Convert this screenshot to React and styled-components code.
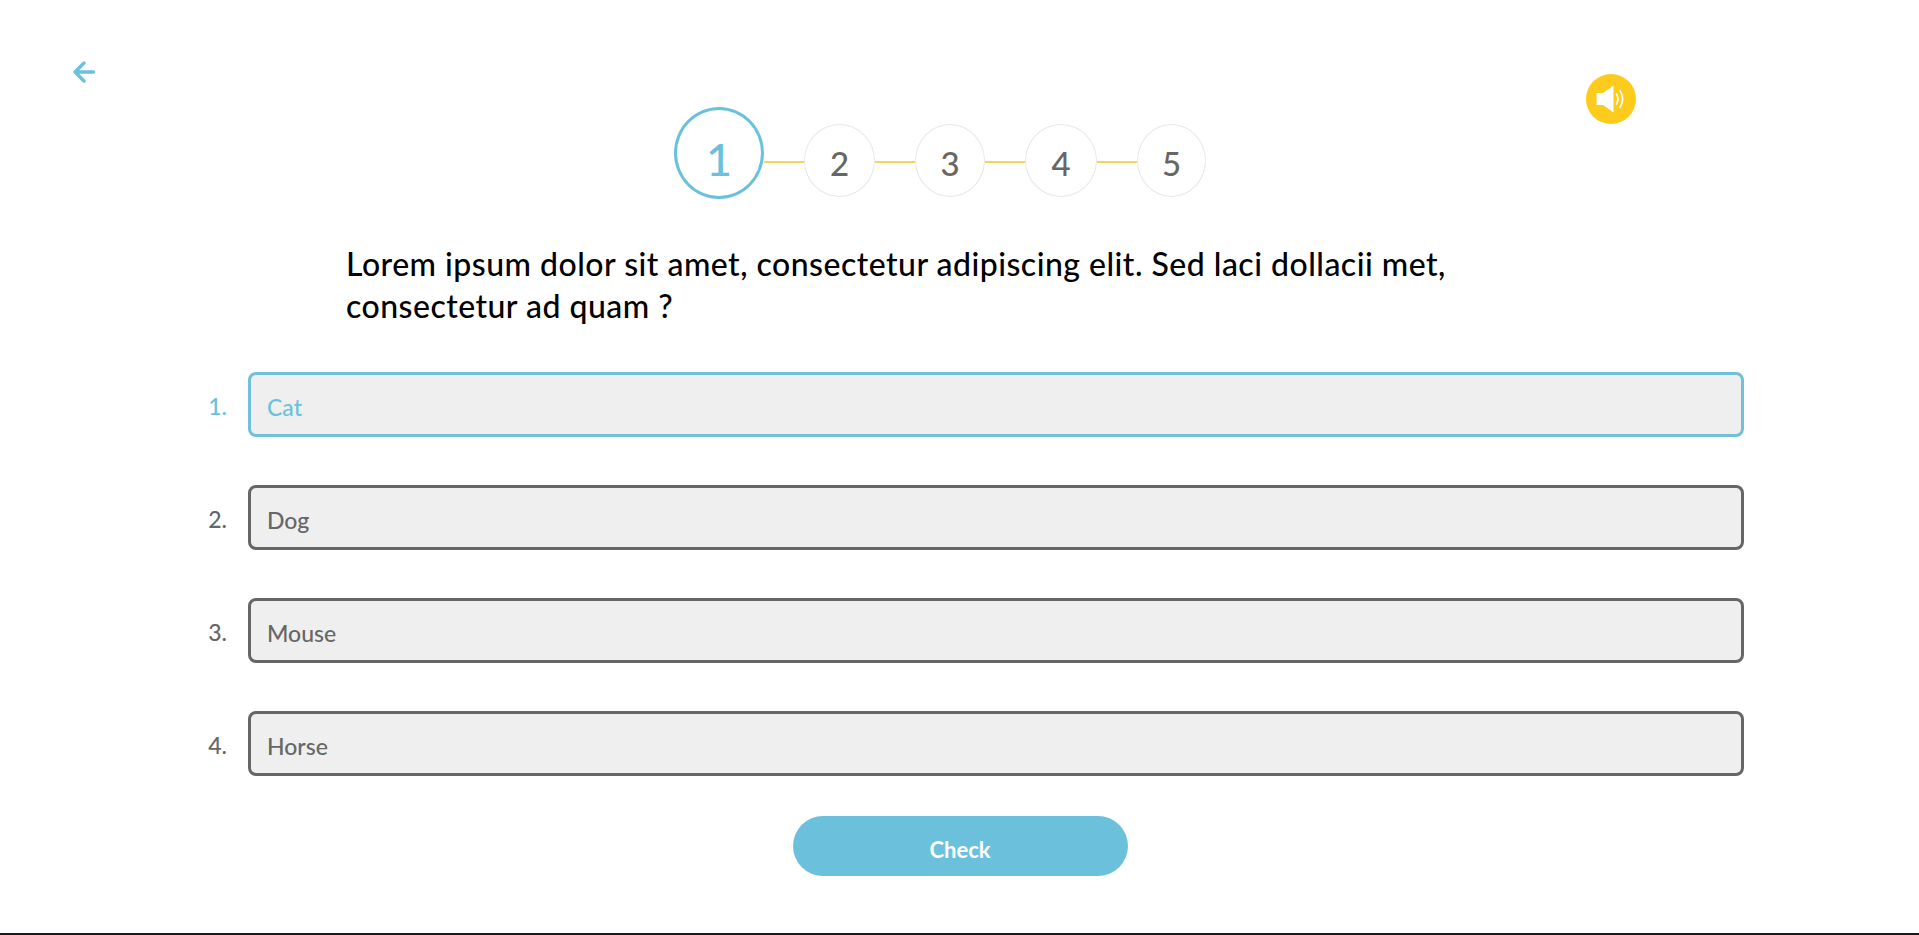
import React from 'react'
import styled, { createGlobalStyle } from 'styled-components'

const GlobalStyle = createGlobalStyle`
  html, body { margin: 0; padding: 0; background: #fff; }
  body { font-family: "Lato", "Noto Sans", sans-serif; overflow: hidden; }
`

const Page = styled.div`
  width: 1919px;
  height: 935px;
  box-sizing: border-box;
  border-bottom: 2px solid #1a1a1f;
  display: flex;
  flex-direction: column;
`

const TopBar = styled.header`
  display: flex;
  align-items: flex-start;
  height: 199px;
  padding-left: 73px;
`

const BackButton = styled.button`
  width: 22px;
  height: 22px;
  padding: 0;
  margin-top: 61px;
  border: 0;
  background: none;
  color: #6bc1dc;
  display: flex;
`

const Stepper = styled.ol`
  list-style: none;
  margin: 107px 0 0 579px;
  padding: 0;
  display: flex;
  align-items: flex-start;
`

const StepLine = styled.span`
  width: 40px;
  height: 2px;
  margin-top: 54px;
  background: #f3d55a;
`

const Step = styled.li`
  box-sizing: border-box;
  width: ${p => p.$w}px;
  height: ${p => (p.$active ? 92 : 73)}px;
  margin-top: ${p => (p.$active ? 0 : 17)}px;
  border-radius: 50%;
  border: ${p => (p.$active ? '3px solid #6bc1dc' : '1px solid #e8e8e8')};
  color: ${p => (p.$active ? '#6bc1dc' : '#666')};
  font-size: ${p => (p.$active ? 45 : 33)}px;
  font-weight: 500;
  line-height: 1;
  display: flex;
  align-items: center;
  justify-content: center;
  padding-top: ${p => (p.$active ? 12 : 6)}px;
`

const SoundButton = styled.button`
  width: 50px;
  height: 50px;
  margin: 74px 0 0 380px;
  padding: 0;
  border: 0;
  border-radius: 50%;
  background: #fccb1c;
  color: #fff;
  display: flex;
  align-items: center;
  justify-content: center;
`

const Question = styled.h1`
  margin: 44px 0 0 346px;
  font-size: 32px;
  font-weight: 500;
  letter-spacing: 0.48px;
  line-height: 42px;
  color: #000;
`

const Answers = styled.div`
  margin-top: 45px;
  display: flex;
  flex-direction: column;
  gap: 48px;
`

const AnswerRow = styled.div`
  display: flex;
  align-items: center;
  color: ${p => (p.$active ? '#6bc1dc' : '#666')};
`

const AnswerNumber = styled.span`
  width: 227px;
  padding-top: 2px;
  text-align: right;
  font-size: 23px;
  font-weight: 500;
  margin-right: 21px;
`

const AnswerBox = styled.button`
  box-sizing: border-box;
  width: 1496px;
  height: 65px;
  padding: 4px 16px 0;
  border: 3px solid ${p => (p.$active ? '#72bfd8' : '#666')};
  border-radius: 8px;
  background: #efefef;
  color: inherit;
  font: inherit;
  font-size: 23px;
  font-weight: 500;
  text-align: left;
`

const CheckButton = styled.button`
  align-self: center;
  width: 335px;
  height: 60px;
  margin: 40px 0 0 1px;
  padding: 6px 0 0;
  border: 0;
  border-radius: 30px;
  background: #6bc1dc;
  color: #fff;
  font: inherit;
  font-size: 22px;
  font-weight: 700;
`

const steps = [
  { n: 1, w: 90 },
  { n: 2, w: 71 },
  { n: 3, w: 70 },
  { n: 4, w: 72 },
  { n: 5, w: 69 },
]

const answers = ['Cat', 'Dog', 'Mouse', 'Horse']

function ArrowIcon() {
  return (
    <svg width="22" height="22" viewBox="0 0 22 22" fill="none" stroke="currentColor" strokeWidth="3.4" strokeLinecap="round" strokeLinejoin="round">
      <path d="M20.5 11H2.5M11 2 2 11l9 9" />
    </svg>
  )
}

function SpeakerIcon() {
  return (
    <svg width="32" height="32" viewBox="0 0 32 32" fill="none">
      <path d="M1.5 10h6.500l10.500-7.500v27L8 22H1.500z" fill="currentColor" />
      <path d="M21.500 11c1.800 3.200 1.800 6.800 0 10M25 7.500c3.300 5.300 3.300 11.700 0 17" stroke="currentColor" strokeWidth="1.700" strokeLinecap="round" />
    </svg>
  )
}

export default function App() {
  return (
    <>
      <GlobalStyle />
      <Page>
        <TopBar>
          <BackButton aria-label="Back"><ArrowIcon /></BackButton>
          <Stepper>
            {steps.map((s, i) => (
              <React.Fragment key={s.n}>
                <Step $w={s.w} $active={i === 0}>{s.n}</Step>
                {i < steps.length - 1 && <StepLine />}
              </React.Fragment>
            ))}
          </Stepper>
          <SoundButton aria-label="Sound"><SpeakerIcon /></SoundButton>
        </TopBar>
        <Question>
          Lorem ipsum dolor sit amet, consectetur adipiscing elit. Sed laci dollacii met,<br />
          consectetur ad quam ?
        </Question>
        <Answers>
          {answers.map((a, i) => (
            <AnswerRow key={a} $active={i === 0}>
              <AnswerNumber>{i + 1}.</AnswerNumber>
              <AnswerBox $active={i === 0}>{a}</AnswerBox>
            </AnswerRow>
          ))}
        </Answers>
        <CheckButton>Check</CheckButton>
      </Page>
    </>
  )
}
